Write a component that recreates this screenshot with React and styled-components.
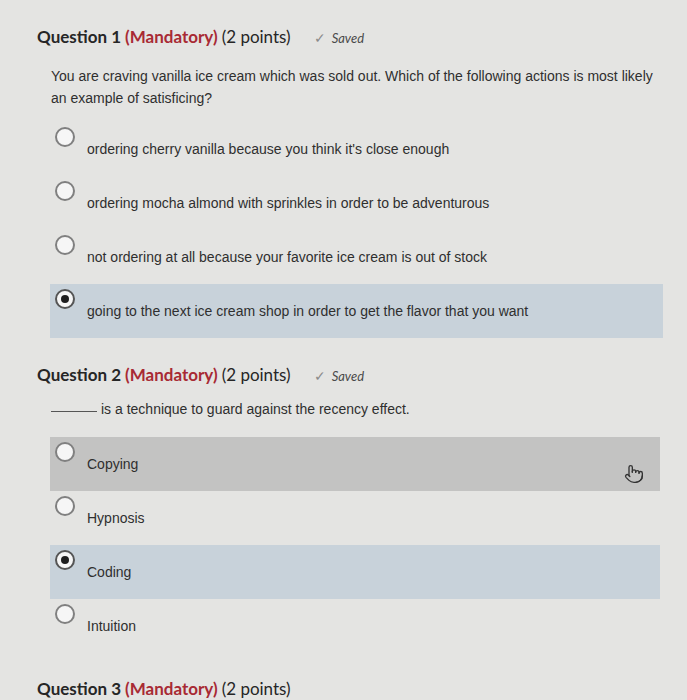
import React from "react";
import styled, { createGlobalStyle } from "styled-components";
import { Pointer } from "lucide-react";

const GlobalStyle = createGlobalStyle`
  html, body {
    margin: 0;
    background: #e4e4e2;
  }
`;

const Page = styled.div`
  padding: 25px 0 0 37px;
  min-height: 675px;
  background: #e4e4e2;
`;

const Question = styled.section`
  margin-top: ${(p) => p.$gap || 0}px;
`;

const Heading = styled.h3`
  display: flex;
  align-items: baseline;
  margin: 0;
  font-family: Lato, "Liberation Sans", sans-serif;
  font-size: 17px;
  font-weight: 400;
  line-height: 24px;
  color: #262626;
`;

const Number = styled.span`
  font-weight: 700;
`;

const Mandatory = styled.span`
  color: #a82a34;
  margin: 0 4px;
  font-weight: 700;
`;

const Saved = styled.span`
  margin-left: 23px;
  font-size: 13px;
  font-style: italic;
  color: #4a4a4a;
  display: flex;
  align-items: baseline;
  gap: 6px;
`;

const Check = styled.span`
  font-style: normal;
  color: #8a8a8a;
  font-size: 14px;
`;

const Prompt = styled.p`
  margin: ${(p) => p.$top}px 0 0 14px;
  max-width: 612px;
  font-family: "Liberation Sans", Arial, sans-serif;
  font-size: 14px;
  line-height: 22px;
  color: #2f2f2f;
`;

const Blank = styled.span`
  display: inline-block;
  width: 46px;
  border-bottom: 1px solid #555;
  margin-right: 4px;
  vertical-align: 2px;
`;

const Options = styled.div`
  margin: ${(p) => p.$top}px 0 0 13px;
  width: ${(p) => p.$width}px;
  display: flex;
  flex-direction: column;
`;

const Row = styled.label`
  position: relative;
  display: flex;
  align-items: flex-start;
  gap: 12px;
  height: 54px;
  box-sizing: border-box;
  padding: 5px 0 0 5px;
  background: ${(p) =>
    p.$selected ? "#c8d2da" : p.$hover ? "#c3c3c2" : "transparent"};
`;

const Radio = styled.span`
  flex: none;
  width: 20px;
  height: 20px;
  box-sizing: border-box;
  border-radius: 50%;
  border: 2px solid ${(p) => (p.$checked ? "#555" : "#808080")};
  background: #f6f6f6;
  display: flex;
  align-items: center;
  justify-content: center;

  &::after {
    content: "";
    display: ${(p) => (p.$checked ? "block" : "none")};
    width: 8px;
    height: 8px;
    border-radius: 50%;
    background: #1e1e1e;
  }
`;

const OptionText = styled.span`
  margin-top: 13px;
  font-family: "Liberation Sans", Arial, sans-serif;
  font-size: 14px;
  line-height: 18px;
  color: #2f2f2f;
`;

const Cursor = styled.span`
  position: absolute;
  right: 16px;
  top: 27px;
  color: #333;
  display: flex;
`;

function QuestionHeading({ n, saved }) {
  return (
    <Heading>
      <Number>Question {n}</Number>
      <Mandatory>(Mandatory)</Mandatory>
      (2 points)
      {saved && (
        <Saved>
          <Check>✓</Check>Saved
        </Saved>
      )}
    </Heading>
  );
}

const q1 = [
  "ordering cherry vanilla because you think it's close enough",
  "ordering mocha almond with sprinkles in order to be adventurous",
  "not ordering at all because your favorite ice cream is out of stock",
  "going to the next ice cream shop in order to get the flavor that you want",
];

const q2 = ["Copying", "Hypnosis", "Coding", "Intuition"];

export default function App() {
  return (
    <>
      <GlobalStyle />
      <Page>
        <Question>
          <QuestionHeading n={1} saved />
          <Prompt $top={15}>
            You are craving vanilla ice cream which was sold out. Which of the
            following actions is most likely an example of satisficing?
          </Prompt>
          <Options $top={13} $width={613}>
            {q1.map((t, i) => (
              <Row key={t} $selected={i === 3}>
                <Radio $checked={i === 3} />
                <OptionText>{t}</OptionText>
              </Row>
            ))}
          </Options>
        </Question>

        <Question $gap={25}>
          <QuestionHeading n={2} saved />
          <Prompt $top={10}>
            <Blank />
            is a technique to guard against the recency effect.
          </Prompt>
          <Options $top={17} $width={610}>
            {q2.map((t, i) => (
              <Row key={t} $selected={i === 2} $hover={i === 0}>
                <Radio $checked={i === 2} />
                <OptionText>{t}</OptionText>
                {i === 0 && (
                  <Cursor>
                    <Pointer size={20} strokeWidth={1.6} />
                  </Cursor>
                )}
              </Row>
            ))}
          </Options>
        </Question>

        <Question $gap={24}>
          <QuestionHeading n={3} />
        </Question>
      </Page>
    </>
  );
}
